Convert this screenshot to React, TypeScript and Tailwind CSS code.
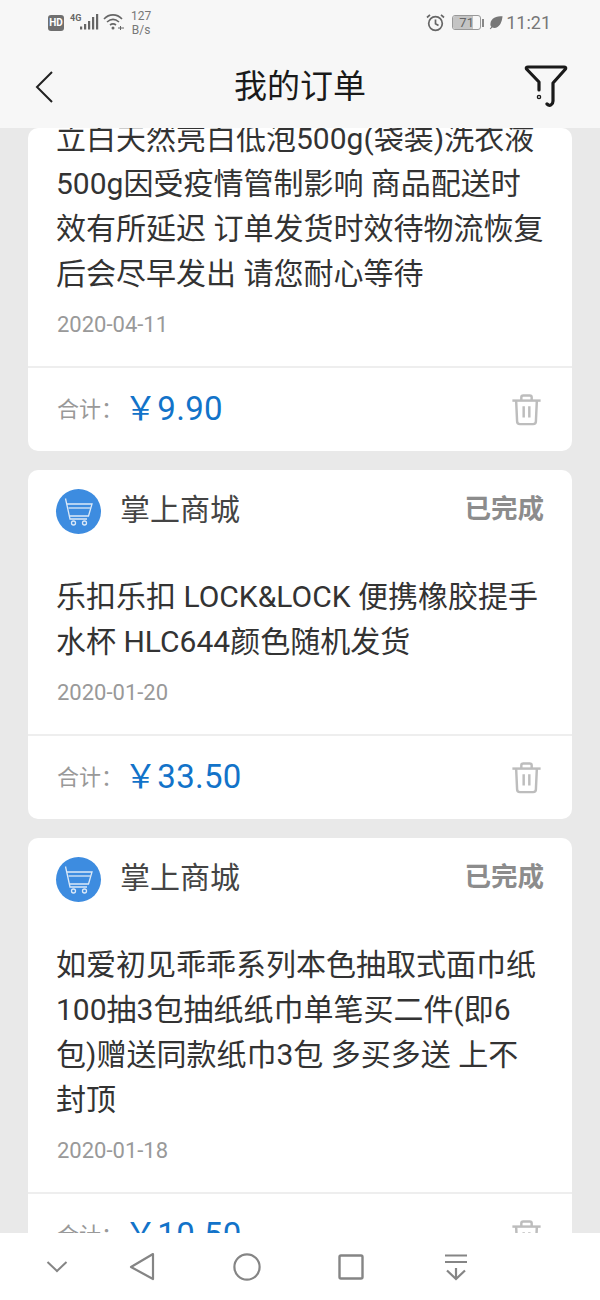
const font = "font-['Roboto','Noto_Sans_CJK_SC',sans-serif]";

function StatusBar() {
  return (
    <div className="flex h-[46px] items-start justify-between pl-[48px] pr-[49px] text-[#777]">
      <div className="flex items-start">
        <span className="mt-[15px] flex h-[16px] w-[16px] items-center justify-center rounded-[3px] bg-[#6f6f6f] text-[10px] font-bold leading-none text-white">
          HD
        </span>
        <span className="ml-[6px] mt-[13px] w-[11px] text-[9px] font-bold leading-[10px] text-[#666]">4G</span>
        <svg className="-ml-[1px] mt-[13px]" width="20" height="18" viewBox="0 0 20 18" fill="#666">
          <rect x="0" y="13.5" width="2.2" height="3" />
          <rect x="4" y="11" width="2.2" height="5.5" />
          <rect x="8" y="8" width="2.2" height="8.5" />
          <rect x="12" y="4" width="2.2" height="12.5" />
          <rect x="16" y="1" width="2.2" height="15.5" />
        </svg>
        <svg className="ml-[3px] mt-[13px]" width="22" height="18" viewBox="0 0 22 18" fill="none" stroke="#666" strokeWidth="1.6">
          <path d="M1 6 C6 0.5 14 0.5 19 6" />
          <path d="M4 9 C8 5.5 12 5.5 16 9" />
          <path d="M7 12 C9 10.5 11 10.5 13 12" />
          <circle cx="10" cy="15" r="1.5" fill="#666" stroke="none" />
          <path d="M15 15 h6 M17.5 13 v4" strokeWidth="1" />
        </svg>
        <div className="ml-[6px] mt-[9px] flex flex-col items-center text-[12px] leading-[14px] text-[#777]">
          <span>127</span>
          <span>B/s</span>
        </div>
      </div>
      <div className="flex items-start">
        <svg className="mt-[13px]" width="19" height="19" viewBox="0 0 19 19" fill="none" stroke="#666" strokeWidth="1.7">
          <circle cx="9.5" cy="10.5" r="6.8" />
          <path d="M9.5 6.5 V10.8 L12.5 12.5" />
          <path d="M1 4.5 L4 1.8 M18 4.5 L15 1.8" />
        </svg>
        <div className="ml-[7px] mt-[15px] flex items-center">
          <div className="relative flex h-[15px] w-[29px] items-center justify-center overflow-hidden rounded-[3px] border border-[#999]">
            <div className="absolute inset-y-0 left-0 w-[20px] bg-[#c4c4c4]" />
            <span className="relative text-[13px] leading-none text-[#666]">71</span>
          </div>
          <div className="ml-[1px] h-[8px] w-[2px] bg-[#888]" />
        </div>
        <svg className="ml-[5px] mt-[15px]" width="14" height="15" viewBox="0 0 15 15" fill="#777">
          <path d="M14.5 0.8 C8 0.8 2 2.5 1.5 9 C1.4 10.5 2 11.5 2.5 12 L0.8 14.2 L1.6 14.8 L3.5 12.8 C5 13.6 7.5 13.5 9.5 12 C13 9.5 14 5 14.5 0.8 Z" />
        </svg>
        <span className="ml-[3px] mt-[12px] text-[18px] leading-[22px] text-[#777]">11:21</span>
      </div>
    </div>
  );
}

function Header() {
  return (
    <header className="h-[128px] shrink-0 bg-[#f7f7f7]">
      <StatusBar />
      <div className="grid h-[82px] grid-cols-[1fr_auto_1fr] items-center">
        <svg className="ml-[35px]" width="18" height="32" viewBox="0 0 18 32" fill="none" stroke="#222" strokeWidth="2">
          <path d="M17 1 L2 16 L17 31" />
        </svg>
        <h1 className="text-[33px] leading-[44px] text-[#1a1a1a]">我的订单</h1>
        <svg className="mr-[32px] -mt-[3px] justify-self-end" width="44" height="44" viewBox="0 0 44 44" fill="none" stroke="#1a1a1a" strokeWidth="3.2" strokeLinecap="round" strokeLinejoin="round">
          <path d="M15 26 V18 L2.5 5 C2 3.5 2.5 3 4 3 H40 C41.5 3 42 3.5 41.5 5 L29 19 V37 C29 40 26 43 23 40" />
          <circle cx="15" cy="33" r="0.7" />
        </svg>
      </div>
    </header>
  );
}

function CartLogo() {
  return (
    <div className="flex h-[45px] w-[45px] shrink-0 items-center justify-center rounded-full bg-[#3d8ce0]">
      <svg width="30" height="30" viewBox="0 0 30 30" fill="none" stroke="#dbe9f8" strokeWidth="1.3">
        <path d="M1.5 1.5 L6 22 H23" />
        <path d="M3 7 H28 L24.5 19 H5.5" />
        <path d="M4.5 11 H26.5" />
        <circle cx="9.5" cy="26" r="2" />
        <circle cx="20.5" cy="26" r="2" />
      </svg>
    </div>
  );
}

function TrashIcon() {
  return (
    <svg width="31" height="32" viewBox="0 0 32 34" fill="none" stroke="#bdbdbd" strokeWidth="2.6">
      <path d="M1 7 H31" />
      <path d="M10.5 7 V3.5 C10.5 2 11.5 1.5 12.5 1.5 H19.5 C20.5 1.5 21.5 2 21.5 3.5 V7" />
      <path d="M5 7 L6 29 C6 31 7 32 9 32 H23 C25 32 26 31 26 29 L27 7" />
      <path d="M13 13 V25 M19 13 V25" />
    </svg>
  );
}

type OrderProps = {
  lines: string[];
  date: string;
  price: string;
  clipped?: boolean;
};

function OrderCard({ lines, date, price, clipped }: OrderProps) {
  return (
    <section className="rounded-[10px] bg-white">
      {!clipped && (
        <div className="flex items-center justify-between pl-[28px] pr-[28px] pt-[19px]">
          <div className="flex items-center gap-[19px]">
            <CartLogo />
            <span className="-mt-[3px] text-[30px] leading-[40px] text-[#444]">掌上商城</span>
          </div>
          <span className="-mt-[5px] text-[26.5px] font-bold leading-[36px] text-[#8c8c8c]">已完成</span>
        </div>
      )}
      <div className={clipped ? "-mt-[12px] px-[28px]" : "mt-[40px] px-[28px]"}>
        {lines.map((line) => (
          <p key={line} className="whitespace-nowrap text-[30px] leading-[45px] text-[#333]">
            {line}
          </p>
        ))}
        <p className="mt-[15px] pb-[27px] pl-[1px] text-[22px] leading-[28px] text-[#999]">{date}</p>
      </div>
      <div className="flex h-[85px] items-center justify-between border-t-2 border-[#eeeeee] pb-[1px] pl-[29px] pr-[30px]">
        <div className="flex items-center">
          <span className="w-[66px] text-[22px] text-[#999]">合计：</span>
          <span className="ml-[1px] text-[33px] leading-[40px] tracking-[0.3px] text-[#1273c9]">￥{price}</span>
        </div>
        <div className="mt-[2px]">
          <TrashIcon />
        </div>
      </div>
    </section>
  );
}

function NavBar() {
  return (
    <nav className="flex h-[67px] shrink-0 items-center bg-white pl-[37px]">
      <svg width="40" height="40" viewBox="0 0 40 40" fill="none" stroke="#858585" strokeWidth="2">
        <path d="M10.5 15 L20 24 L29.5 15" />
      </svg>
      <svg className="ml-[45px]" width="40" height="40" viewBox="0 0 40 40" fill="none" stroke="#858585" strokeWidth="2.2" strokeLinejoin="round">
        <path d="M31 7 L9 20 L31 32 Z" />
      </svg>
      <svg className="ml-[65px]" width="40" height="40" viewBox="0 0 40 40" fill="none" stroke="#858585" strokeWidth="2.2">
        <circle cx="20" cy="20" r="12.6" />
      </svg>
      <svg className="ml-[64px]" width="40" height="40" viewBox="0 0 40 40" fill="none" stroke="#858585" strokeWidth="2.4" strokeLinejoin="round">
        <rect x="8.5" y="8.5" width="23" height="23" rx="1.5" />
      </svg>
      <svg className="ml-[65px]" width="40" height="40" viewBox="0 0 40 40" fill="none" stroke="#858585" strokeWidth="2.2">
        <path d="M9 8.5 H31 M9 15 H31" />
        <path d="M20 21 V32 M11 23.5 L20 32 L29 23.5" />
      </svg>
    </nav>
  );
}

export default function App() {
  return (
    <div className={`flex h-[1300px] w-[600px] flex-col overflow-hidden bg-[#e9e9e9] ${font}`}>
      <Header />
      <main className="flex min-h-0 flex-1 flex-col gap-[19px] overflow-hidden px-[28px]">
        <OrderCard
          clipped
          lines={[
            "立白天然亮白低泡500g(袋装)洗衣液",
            "500g因受疫情管制影响 商品配送时",
            "效有所延迟 订单发货时效待物流恢复",
            "后会尽早发出 请您耐心等待",
          ]}
          date="2020-04-11"
          price="9.90"
        />
        <OrderCard
          lines={["乐扣乐扣 LOCK&LOCK 便携橡胶提手", "水杯 HLC644颜色随机发货"]}
          date="2020-01-20"
          price="33.50"
        />
        <OrderCard
          lines={[
            "如爱初见乖乖系列本色抽取式面巾纸",
            "100抽3包抽纸纸巾单笔买二件(即6",
            "包)赠送同款纸巾3包 多买多送 上不",
            "封顶",
          ]}
          date="2020-01-18"
          price="10.50"
        />
      </main>
      <NavBar />
    </div>
  );
}
